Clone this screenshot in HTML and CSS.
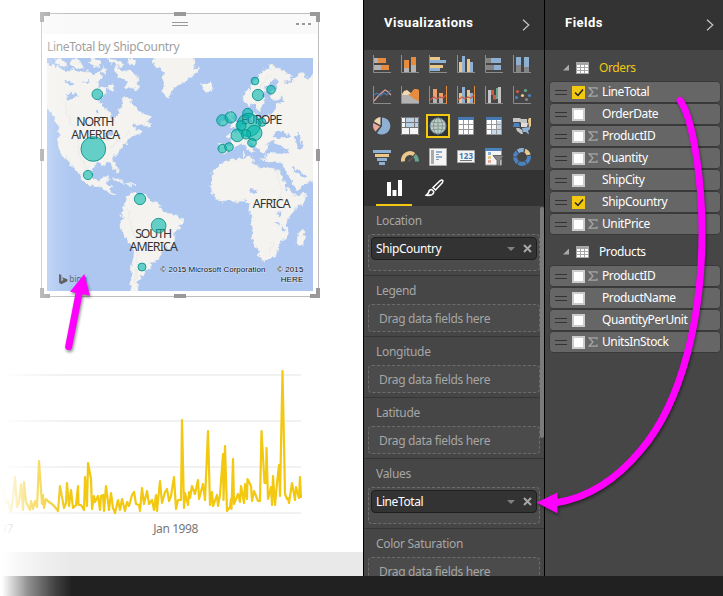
FILE: index.html
```html
<!DOCTYPE html>
<html lang="en">
<head>
<meta charset="utf-8">
<title>Report editor</title>
<link rel="stylesheet" href="styles.css">
</head>
<body>
<svg class="defs" width="0" height="0">
  <defs>
    <symbol id="sigma" viewBox="0 0 10 10"><path d="M9 2.6V.8H1L5 5 1 9.2h8V7.4" fill="none" stroke="#a6a6a6" stroke-width="1.3"/></symbol>
    <symbol id="table" viewBox="0 0 13 12"><path fill="#a6a6a6" d="M0 0h13v12H0z"/><path fill="#fff" d="M1 3h3v2H1zM5 3h3v2H5zM9 3h3v2H9zM1 6h3v2H1zM5 6h3v2H5zM9 6h3v2H9zM1 9h3v2H1zM5 9h3v2H5zM9 9h3v2H9z"/></symbol>
    <symbol id="chev" viewBox="0 0 8 12"><path d="M1 .7 6.8 6 1 11.3" fill="none" stroke="#c8c8c8" stroke-width="1.2"/></symbol>
    <symbol id="close" viewBox="0 0 9 9"><path d="M1 1l7 7M8 1 1 8" fill="none" stroke="#a6a6a6" stroke-width="2"/></symbol>
    <filter id="coast" x="0" y="0" width="1" height="1"><feTurbulence type="fractalNoise" baseFrequency=".075" numOctaves="2" seed="4"/><feDisplacementMap in="SourceGraphic" scale="20" xChannelSelector="R" yChannelSelector="G"/></filter>
  </defs>
</svg>
<div class="app">
  <div class="workspace">
    <main class="canvas">
      <section class="card">
        <i class="h tl"></i><i class="h tc"></i><i class="h tr"></i><i class="h ml"></i><i class="h mr"></i><i class="h bl"></i><i class="h bc"></i><i class="h br"></i>
        <div class="card-bar"><span class="grip"></span><span class="dots"><b></b><b></b><b></b></span></div>
        <h2 class="card-title"><span>LineTotal by ShipCountry</span></h2>
        <svg class="map" viewBox="51 174 798 699" width="266" height="233">
          <rect x="51" y="174" width="798" height="699" fill="#adc7f1"/>
          <g filter="url(#coast)">
          <g fill="#f4f3f0" stroke="#e8eaea" stroke-width="1.500" stroke-linejoin="round">
            <path d="M30 190 68 196 90 205 110 218 130 207 150 220 175 212 190 222 212 217 215 232 200 246 208 258 228 262 232 274 220 286 206 294 210 312 226 328 242 338 250 360 262 352 266 332 280 314 276 297 282 288 296 294 302 311 304 304 315 320 327 334 350 343 368 352 340 372 308 378 312 388 326 388 332 400 314 405 301 412 288 428 276 438 270 452 255 463 247 480 266 501 263 518 252 510 246 490 232 489 222 496 202 487 187 500 184 522 194 541 211 544 218 532 237 528 231 550 243 560 241 574 255 582 248 584 232 577 219 561 194 560 173 550 157 542 149 524 135 505 119 492 108 475 93 462 84 430 87 397 82 369 70 352 60 330 30 320Z"/>
            <path d="M75 174 96 178 112 196 94 201 74 188ZM128 178 150 185 160 201 141 207 119 194ZM187 174 210 182 214 194 197 201 175 188ZM216 203 230 210 226 222 210 216ZM233 174 260 178 280 193 266 200 255 188 240 187ZM250 204 264 200 275 214 300 211 318 226 328 241 319 250 331 263 316 274 307 261 301 268 281 259 294 245 283 234 267 231 258 220ZM299 174 318 178 314 194 292 188ZM234 255 250 259 247 271 236 269ZM342 366 363 371 358 382 340 378ZM368 160 490 160 495 190 489 211 508 199 502 216 478 232 466 247 439 258 424 279 416 295 403 286 399 267 404 250 395 235 402 224 391 207 371 194ZM516 253 539 248 551 257 547 268 530 275 519 267Z"/>
            <path d="M299 583 312 574 321 581 347 584 361 602 384 607 392 624 400 638 425 642 459 658 457 672 440 688 431 707 432 731 416 744 402 751 386 775 370 790 360 790 363 806 342 812 341 825 330 825 333 835 322 848 326 890 304 890 299 850 305 825 304 800 311 775 312 748 296 728 284 704 270 679 270 667 280 653 274 636 283 612Z"/>
            <path d="M575 487 595 481 625 477 660 471 669 474 666 488 691 502 718 503 749 510 758 538 769 562 790 588 829 582 823 604 795 629 775 653 768 668 776 703 760 719 747 731 746 754 733 773 716 779 700 783 689 770 680 743 665 711 669 687 663 669 667 653 656 634 660 612 650 603 633 600 615 604 598 600 580 607 557 595 546 574 541 546 551 514Z"/>
            <path d="M821 685 824 709 818 732 808 742 801 732 803 702ZM567 430 590 434 606 434 602 416 592 407 604 400 617 397 630 388 642 374 662 365 665 337 677 332 680 354 700 356 719 346 735 329 738 312 765 304 758 293 739 300 723 293 722 276 739 264 742 244 731 237 719 251 704 268 700 286 706 299 697 315 690 336 681 331 674 309 658 315 641 304 639 285 656 267 673 246 686 226 702 211 724 202 749 205 785 227 778 242 759 247 773 253 788 239 809 232 810 218 820 218 829 237 870 205 870 531 833 547 798 572 785 540 768 515 760 493 742 484 707 486 704 469 719 460 750 462 779 455 762 441 738 431 729 424 711 432 708 452 699 464 686 452 672 432 655 421 662 440 674 451 667 464 654 448 641 430 618 435 601 454 584 463 568 455Z"/>
            <path d="M591 345 598 331 611 338 606 353 621 366 622 382 600 382 607 366ZM574 361 591 357 588 374 571 378ZM245 533 271 539 283 548 260 543ZM288 549 307 551 315 558 293 556ZM640 456 645 455 645 468 640 468ZM691 475 710 478 700 481ZM716 198 730 195 735 202 720 207Z"/>
          </g>
          <g fill="#adc7f1"><path d="M108 283 127 279 148 285 130 293 115 299ZM106 239 133 246 136 252 118 256ZM157 246 177 239 174 250ZM197 320 210 342 200 338ZM224 401 242 391 252 400 237 405 242 424 231 421ZM253 410 270 406 267 412ZM731 404 745 392 771 398 777 415 753 411 738 421ZM795 406 809 398 813 424 822 441 808 448 799 429ZM664 567 681 570 674 582 663 577ZM743 636 752 639 750 651 740 648ZM737 659 746 667 747 680 741 674ZM755 675 764 690 760 699ZM786 500 823 524 833 526 824 533 800 520Z"/></g>
          <g fill="none" stroke="#e2e3e0" stroke-width="5" opacity=".4"><path d="M100 300 116 350 128 390 145 430 149 470 172 507M240 445 265 421 305 390M292 620 300 670 322 720 322 790 316 845M735 500 755 565 747 615M714 760 732 724M680 310 690 260 722 225"/></g>
          </g>
          <g class="continent" text-anchor="middle">
            <text x="196" y="378" textLength="114">NORTH</text><text x="197" y="417" textLength="147">AMERICA</text>
            <text x="695" y="373" textLength="124">EUROPE</text><text x="725" y="625" textLength="114">AFRICA</text>
            <text x="371" y="715" textLength="111">SOUTH</text><text x="371" y="754" textLength="145">AMERICA</text>
          </g>
          <g fill="#01b8aa" fill-opacity=".6" stroke="#018b84" stroke-opacity=".8" stroke-width="3">
            <circle cx="202" cy="283" r="16"/><circle cx="190" cy="447" r="37"/><circle cx="174" cy="525" r="14"/>
            <circle cx="330" cy="597" r="17"/><circle cx="386" cy="677" r="22"/><circle cx="336" cy="801" r="12"/>
            <circle cx="675" cy="243" r="11.5"/><circle cx="723" cy="269" r="13"/><circle cx="684" cy="285" r="17"/>
            <circle cx="577" cy="361" r="17"/><circle cx="602" cy="352" r="17"/><circle cx="653" cy="340" r="15"/>
            <circle cx="656" cy="375" r="35"/><circle cx="633" cy="377" r="15"/><circle cx="696" cy="367" r="12"/>
            <circle cx="673" cy="399" r="23"/><circle cx="622" cy="406" r="19"/><circle cx="648" cy="403" r="14"/>
            <circle cx="577" cy="446" r="13"/><circle cx="597" cy="441" r="13"/><circle cx="666" cy="428" r="13"/>
          </g>
          <path fill="#555" d="M87 822 94 825V843L100 840 96 832 112 838V844L94 853 87 848Z"/>
          <text class="bing" x="118" y="846">bing</text>
          <g class="copyright"><text x="391" y="815" textLength="315">© 2015 Microsoft Corporation</text><text x="741" y="815" textLength="79">© 2015</text><text x="752" y="845" textLength="68">HERE</text></g>
        </svg>
      </section>
      <figure class="trend">
        <svg viewBox="0 360 310 160" width="310" height="160">
          <path d="M3 375H301M3 421H301M3 467H301M3 513H301" stroke="#f1f1f1" stroke-width="2"/>
          <path fill="none" stroke="#f2c811" stroke-width="2.2" stroke-linejoin="round" d="M1 506 3.5 487 5.5 504 8 501 11 512 13 498 15 477 17 507 19 502 21 484 23 510 24 482 26 502 30 510 31 501 33 509 35 501 37 507 39 461 42 504 43 495 44 508 46 499 49 502 52 504 55 507 58 511 60 486 64 508 66 503 67 483 69 506 71 490 73 508 76 505 78 486 78.5 505 81 505 84 510 85 477 87 506 88 463 91 479 92 509 94 496 95 502 98 496 100 510 101 496 103 495 104 511 106 486 108 502 109 510 111 493 113 508 115 513 118 500 120 510 122 499 125 511 127 502 129 506 132 495 134 492 136 504 139 505 140 511 142 488 144 504 147 491 149 504 152 500 154 510 156 495 157 511 160 481 162 503 165 492 167 489 169 501 171 496 174 477 176 509 178 500 181 500 182 420 184 508 185 493 188 505 189 492 190 498 192 486 195 494 198 480 199 499 203 484 205 500 208 431 210 505 212 492 213 506 217 495 218 506 220 495 223 454 223.5 500 225 446 227 511 230 507 231 499 231.5 509 233 459 234 504 238 494 240 502 241 486 244 503 245 484 247 499 247.5 479 251 486 252 501 254 491 258 501 260 501 261.5 431 264.5 483 266 483 266.5 448 268 499 271 487 272 505 273 476 275 505 277 483 279 465 280 496 282.5 371 285 494 287 499 288 498 289 503 292 483 295 500 296 487 299 498 300 477 301 498"/>
        </svg>
        <figcaption><span>1997</span><span>Jan 1998</span></figcaption>
      </figure>
      <div class="canvas-foot"></div>
    </main>

    <aside class="viz">
      <header class="pane-head"><h1 class="t-viz">Visualizations</h1><svg width="8" height="12"><use href="#chev"/></svg></header>
      <div class="gallery">
        <svg viewBox="0 0 18 18"><path fill="#b3b3b3" d="M1 3h6v5H1zM1 10h8v5H1z"/><path fill="#e68c3f" d="M5 3h8v5H5zM8 10h8v5H8z"/><path class="axis" d="M.5 0v17.5H18"/></svg>
        <svg viewBox="0 0 18 18"><path fill="#e68c3f" d="M3 5h5v8H3zM10 2h5v11h-5z"/><path fill="#b3b3b3" d="M3 13h5v4H3zM10 10h5v7h-5z"/><path class="axis" d="M.5 0v17.5H18"/></svg>
        <svg viewBox="0 0 18 18"><path fill="#ebc88a" d="M1 2h10v3H1zM1 10h13v3H1z"/><path fill="#8eb0d3" d="M1 5h16v3H1zM1 13h10v3H1z"/><path class="axis" d="M.5 0v17.5H18"/></svg>
        <svg viewBox="0 0 18 18"><path fill="#ebc88a" d="M2 7h3v10H2zM10 4h3v13h-3z"/><path fill="#8eb0d3" d="M5 1h3v16H5zM13 7h3v10h-3z"/><path class="axis" d="M.5 0v17.5H18"/></svg>
        <svg viewBox="0 0 18 18"><path fill="#858585" d="M1 3h5v5H1zM1 10h8v5H1z"/><path fill="#8eb0d3" d="M6 3h10v5H6zM9 10h7v5H9z"/><path class="axis" d="M.5 0v17.5H18"/></svg>
        <svg viewBox="0 0 18 18"><path fill="#8eb0d3" d="M3 2h5v9H3zM11 2h5v11h-5z"/><path fill="#858585" d="M3 10h5v7H3zM11 12h5v5h-5z"/><path class="axis" d="M.5 0v17.5H18"/></svg>

        <svg viewBox="0 0 18 18"><path fill="none" stroke="#dfa096" stroke-width="1.2" d="m1 15 5-6 6-5 2 1 4 4"/><path fill="none" stroke="#4778af" stroke-width="1.2" d="m1 9 3-2 3 3 4-3 3 2 4-5"/><path class="axis" d="M.5 0v17.5H18"/></svg>
        <svg viewBox="0 0 18 18"><path fill="#f0d9b1" d="m1 8 2-3 3-1 5 4v6H1z"/><path fill="#e68c3f" d="m7 9 3-2 3-4h3l2 1v12H8z"/><path fill="#b3b3b3" d="m1 9 7 0 5 4 5 2v2H1z"/><path class="axis" d="M.5 0v17.5H18"/></svg>
        <svg viewBox="0 0 18 18"><path fill="#f0a068" d="M4 3h4v8H4zM10 7h4v4h-4z"/><path fill="#b3b3b3" d="M4 11h4v6H4zM10 12h4v5h-4z"/><path d="m1 14 4-3 3 2 3-2 3 1 3-3" fill="none" stroke="#cf5a43" stroke-width="1.2"/><path class="axis" d="M.5 0v17.5H18"/><path stroke="#e68c3f" d="M17.5 0v18"/></svg>
        <svg viewBox="0 0 18 18"><path fill="#ebc88a" d="M2 7h3v10H2zM10 4h3v13h-3z"/><path fill="#8eb0d3" d="M5 1h3v16H5zM13 7h3v10h-3z"/><path d="m1 14 4-3 3 2 3-2 3 1 3-3" fill="none" stroke="#cf5a43" stroke-width="1.2"/><path class="axis" d="M.5 0v17.5H18"/><path stroke="#e68c3f" d="M17.5 0v18"/></svg>
        <svg viewBox="0 0 18 18"><path fill="#c4c4c4" d="M3 4h3v13H3zM13 1h3v16h-3z"/><path fill="#cf5a43" d="M6 4h3v5H6zM8 9h3v4.500H8z"/><path fill="#6aa58b" d="M11 2h2v11h-2z"/><path class="axis" d="M.5 0v17.5H18"/></svg>
        <svg viewBox="0 0 18 18"><g fill="#cf5a43"><circle cx="4.500" cy="5.500" r="1.600"/></g><circle cx="9.500" cy="9.500" r="1.600" fill="#ebc88a"/><g fill="#4a83bf"><circle cx="3.500" cy="11.500" r="1.600"/><circle cx="16.500" cy="9.500" r="1.600"/></g><circle cx="12.500" cy="4.500" r="1.600" fill="#6aa58b"/><circle cx="13.500" cy="13.500" r="1.600" fill="#858585"/><path class="axis" d="M.5 0v17.5H18"/></svg>

        <svg viewBox="0 0 18 18"><path fill="#8eb0d3" d="M9 9V.5a8.500 8.500 0 1 1-5 15.500z"/><path fill="#f0d9b1" d="M7.500 8.200V0A8.500 8.500 0 0 0 1 4.600z"/><path fill="#eaa99a" d="M7 9.500 2.500 14.500A9 9 0 0 1 .3 6z"/></svg>
        <svg viewBox="0 0 18 18"><path fill="#f5f5f5" d="M0 0h18v18H0z"/><path fill="#b8cfe5" d="M5 1h12v9H5z"/><path fill="none" stroke="#777" d="M.5.5h17v17H.5zM4.500 0v10M0 10.500h18M0 5.500h17M13.500 0v10M8.500 11v6"/></svg>
        <span class="picked"><svg viewBox="0 0 18 18"><circle cx="9" cy="9" r="8" fill="#c8cccb" stroke="#5a7f9a"/><g fill="none" stroke="#7d9d90"><path d="M9 1v16M1 9h16M2.500 5q6.500 2 13 0M2.500 13q6.500-2 13 0"/><ellipse cx="9" cy="9" rx="4.500" ry="8"/></g></svg></span>
        <svg viewBox="0 0 18 18"><path fill="#fff" d="M1 1h16v16H1z"/><path fill="#4778af" d="M1 0h16v3H1z"/><path fill="none" stroke="#999" d="M1.500 3v14.500h15V3M6.500 3v14M11.500 3v14M1 7.500h16M1 12.500h16"/></svg>
        <svg viewBox="0 0 18 18"><path fill="#fff" d="M1 1h16v16H1z"/><path fill="#c7d9eb" d="M11 4h6v13h-6zM7 12h10v5H7z"/><path fill="#4778af" d="M1 0h16v3H1z"/><path fill="none" stroke="#999" d="M1.500 3v14.500h15V3M6.500 3v14M11.500 3v14M1 7.500h16M1 12.500h16"/></svg>
        <svg viewBox="0 0 18 18"><path fill="#c4c4c4" d="M0 1h7l1 1h6v4H8L7 5H0zM3 11h3l3 2 1 4H8l-4-3z"/><path fill="#4a83bf" d="M1 6h5l1 4H0z"/><path fill="#dedede" d="M8 6h7l-1 4H8z"/><path fill="#ebc88a" d="m15 3 1-2h2v8l-2 2z"/><path fill="#8eb0d3" d="m9 11 8-1v2l-2 2 1 3h-1l-2-2h-3z"/></svg>

        <svg viewBox="0 0 18 18"><path fill="#8eb0d3" d="M0 2h18v3H0zM4 10h10v3H4zM6 14h6v3H6z"/><path fill="#ebc88a" d="M2 6h14v3H2z"/></svg>
        <svg viewBox="0 0 18 18"><path fill="none" stroke="#ebc88a" stroke-width="4" d="M2 13.500a7 7.500 0 0 1 11-7"/><path fill="none" stroke="#6aa58b" stroke-width="4" d="M13.500 7.500q2.500 2 2.500 6"/><path d="m7 13 5-4-3 4z" fill="#555" stroke="#5c5c5c"/></svg>
        <svg viewBox="0 0 18 18"><path fill="#f5f5f5" stroke="#aaa" d="M.5.5h17v17H.5z"/><path fill="#aaa" d="M2 2h3v14H2z"/><path fill="#8eb0d3" d="M7 3h6v2H7zM7 8h6v2H7z"/><path fill="#999" d="M7 6h3v1H7zM7 11h3v1H7z"/></svg>
        <svg viewBox="0 0 18 18"><path fill="#f5f5f5" stroke="#aaa" d="M.5 2.500h17v12H.5z"/><text class="n123" x="2" y="10.500" textLength="14">123</text><path stroke="#777" d="M3 12.500h12"/></svg>
        <svg viewBox="0 0 18 18"><path fill="#f5f5f5" stroke="#999" d="M.5 1h16v16h-16z"/><path fill="#4a83bf" d="M0 0h17v3H0z"/><path fill="#8eb0d3" d="M3 4h3v3H3z"/><path fill="#ebc88a" d="M3 8h3v3H3z"/><path fill="#eaa99a" d="M3 12h3v3H3z"/><path fill="#858585" stroke="#444" stroke-width=".7" d="M8 7.500h11l-4 5v4l-3 2v-6z"/></svg>
        <svg viewBox="0 0 18 18"><g fill="none" stroke-width="4"><circle cx="9" cy="9" r="7" stroke="#4a83bf"/><path stroke="#8eb0d3" d="M5 3.300A7 7 0 0 1 10.500 2.200"/><path stroke="#ebc88a" d="M11.500 2.500q3.300 1.500 4.300 4.500"/></g><path stroke="#464646" d="m3 1 2 4M12 0l-1 5M13 8l5-1M0 9h5M6 13l-2 4M12 13l2 4"/></svg>
      </div>
      <nav class="tabs">
        <span class="tab on"><svg width="15" height="16" viewBox="0 0 15 16"><path fill="#fff" d="M0 2h4v14H0zM5.500 10h4v6h-4zM11 0h4v16h-4z"/></svg></span>
        <span class="tab"><svg width="19" height="18" viewBox="0 0 19 18"><path fill="none" stroke="#fff" stroke-width="1.500" d="m8 8.500 7-6.700q1.800-1.300 2.600-.5t-.5 2.700L10.500 11Z"/><path fill="none" stroke="#fff" stroke-width="1.600" d="M1.200 16.200q2-1 2.500-3.200.5-2.500 3-2.500l2 2q.3 2.500-2 3.300-2.500.8-5.500.4Z"/></svg></span>
      </nav>
      <div class="wells">
        <section class="well"><h3>Location</h3><div class="drop tall"><div class="pill"><span class="w-sc">ShipCountry</span><i class="caret"></i><svg width="9" height="9"><use href="#close"/></svg></div></div></section>
        <section class="well"><h3>Legend</h3><div class="drop">Drag data fields here</div></section>
        <section class="well"><h3>Longitude</h3><div class="drop">Drag data fields here</div></section>
        <section class="well"><h3>Latitude</h3><div class="drop">Drag data fields here</div></section>
        <section class="well"><h3>Values</h3><div class="drop tall"><div class="pill"><span>LineTotal</span><i class="caret"></i><svg width="9" height="9"><use href="#close"/></svg></div></div></section>
        <section class="well"><h3>Color Saturation</h3><div class="drop">Drag data fields here</div></section>
        <div class="scrollbar"></div>
      </div>
    </aside>

    <aside class="fields">
      <header class="pane-head"><h1 class="t-fields">Fields</h1><svg width="8" height="12"><use href="#chev"/></svg></header>
      <div class="group">
        <div class="group-head on"><i class="tri"></i><svg width="13" height="12"><use href="#table"/></svg><span>Orders</span></div>
        <div class="field"><i class="bars"></i><i class="box checked"><svg viewBox="0 0 13 13"><path d="m3 6.500 3 3 5-6"/></svg></i><svg class="sig"><use href="#sigma"/></svg><span>LineTotal</span></div>
        <div class="field"><i class="bars"></i><i class="box"></i><svg class="sig"></svg><span>OrderDate</span></div>
        <div class="field"><i class="bars"></i><i class="box"></i><svg class="sig"><use href="#sigma"/></svg><span>ProductID</span></div>
        <div class="field"><i class="bars"></i><i class="box"></i><svg class="sig"><use href="#sigma"/></svg><span>Quantity</span></div>
        <div class="field"><i class="bars"></i><i class="box"></i><svg class="sig"></svg><span>ShipCity</span></div>
        <div class="field"><i class="bars"></i><i class="box checked"><svg viewBox="0 0 13 13"><path d="m3 6.500 3 3 5-6"/></svg></i><svg class="sig"></svg><span>ShipCountry</span></div>
        <div class="field"><i class="bars"></i><i class="box"></i><svg class="sig"><use href="#sigma"/></svg><span>UnitPrice</span></div>
      </div>
      <div class="group">
        <div class="group-head"><i class="tri"></i><svg width="13" height="12"><use href="#table"/></svg><span>Products</span></div>
        <div class="field"><i class="bars"></i><i class="box"></i><svg class="sig"><use href="#sigma"/></svg><span>ProductID</span></div>
        <div class="field"><i class="bars"></i><i class="box"></i><svg class="sig"></svg><span>ProductName</span></div>
        <div class="field"><i class="bars"></i><i class="box"></i><svg class="sig"></svg><span>QuantityPerUnit</span></div>
        <div class="field"><i class="bars"></i><i class="box"></i><svg class="sig"><use href="#sigma"/></svg><span>UnitsInStock</span></div>
      </div>
    </aside>
  </div>
  <footer class="statusbar"></footer>
  <div class="fade"></div>
  <svg class="arrows" width="723" height="596" viewBox="0 0 723 596">
    <g fill="none" stroke="#f0f" stroke-width="7" stroke-linecap="round">
      <path d="M680 100.500C693 118 702 180 702 232C702 318 682 402 641 450C617 479 588 498 555 503"/>
      <path d="M68.700 346.500 79.500 291"/>
    </g>
    <path fill="#f0f" d="M536.700 502.500 557.500 492.500V513.500ZM84.300 274 70 291.700 90 295.700Z"/>
  </svg>
</div>
</body>
</html>
```
FILE: styles.css
```css
* { box-sizing: border-box; margin: 0; padding: 0; }
body { font: 12px/16px "Noto Sans", "Open Sans", sans-serif; overflow: hidden; }
.defs { position: absolute; }
.app { position: relative; width: 723px; height: 596px; overflow: hidden; display: flex; flex-direction: column; background: #fff; }
.workspace { display: flex; height: 576px; }
.statusbar { height: 20px; background: #212121; }

/* report canvas */
.canvas { width: 363px; display: flex; flex-direction: column; background: #fff; }
.card { position: relative; width: 278px; height: 284px; margin: 13px 0 0 41px; border: 1px solid #bdbdbd; padding: 0 5px; background: #fff; }
.card-bar { height: 20px; margin: 0 -5px; background: #f9f9f9; display: grid; grid-template-columns: 1fr 16px 1fr; align-items: center; }
.grip { grid-column: 2; height: 4px; border: solid #999; border-width: 1px 0; }
.dots { display: flex; gap: 3px; justify-content: flex-end; padding-right: 7px; }
.dots b { width: 3px; height: 2px; background: #999; }
.card-title { height: 24px; line-height: 25px; font-size: 12px; font-weight: 400; color: #a0a0a0; white-space: nowrap; letter-spacing: -.32px; }
.map { display: block; }
.continent { font: 37px "Noto Sans", sans-serif; fill: #333; }
.bing { font: 25px "Noto Sans", sans-serif; fill: #666; }
.copyright { font: 24px "Liberation Sans", sans-serif; fill: #111; stroke: #fff; stroke-width: 3px; stroke-opacity: .5; paint-order: stroke; }
.h { position: absolute; border: 0 solid #999; }
.tl, .tr, .bl, .br { width: 10px; height: 10px; }
.tl { left: -2px; top: -2px; border-width: 4px 0 0 4px; }
.tr { right: -2px; top: -2px; border-width: 4px 4px 0 0; }
.bl { left: -2px; bottom: -2px; border-width: 0 0 4px 4px; }
.br { right: -2px; bottom: -2px; border-width: 0 4px 4px 0; }
.tc, .bc { left: 132px; width: 12px; border-top-width: 4px; }
.tc { top: -2px; }
.bc { bottom: -2px; }
.ml, .mr { top: 135px; height: 12px; border-left-width: 4px; }
.ml { left: -2px; }
.mr { right: -2px; }
.trend { margin-top: 63px; height: 192px; }
.trend svg { display: block; }
.trend figcaption { display: flex; justify-content: space-between; width: 211px; margin-left: -13px; padding-top: 1px; color: #777; letter-spacing: -.4px; }
.canvas-foot { height: 24px; background: #e9e9e9; }

/* panes */
.viz, .fields { background: #464646; border-left: 1px solid #000; display: flex; flex-direction: column; overflow: hidden; }
.viz { width: 181px; }
.fields { width: 179px; }
.pane-head { flex: none; height: 50px; background: #333; display: flex; justify-content: space-between; align-items: center; padding: 0 14px 4px 20px; }
.pane-head svg { margin-top: 3px; }
.fields .pane-head { padding-right: 9px; }
.pane-head h1 { font: 700 13px/20px Roboto, sans-serif; color: #fff; letter-spacing: .5px; }
.gallery { flex: none; height: 120px; display: grid; grid-template-columns: repeat(6, 18px); grid-auto-rows: 18px; gap: 13px 10px; padding: 5px 0 0 9px; }
.gallery svg { display: block; width: 18px; height: 18px; overflow: visible; }
.axis { fill: none; stroke: #8c8c8c; }
.picked { width: 24px; height: 24px; margin: -3px; border: 2px solid #f2c811; background: #333; padding: 1px; }
.n123 { font: 700 8px "Noto Sans", sans-serif; fill: #4778af; }
.tabs { flex: none; height: 36px; background: #333; display: flex; gap: 4px; padding-left: 12px; }
.tab { width: 36px; display: flex; justify-content: center; align-items: center; padding-top: 2px; border-bottom: 2px solid transparent; }
.tab.on { border-color: #f2c811; }
.wells { position: relative; flex: 1; min-height: 0; overflow: hidden; }
.well { border-bottom: 1px solid #353535; padding: 0 4px 4px; }
.well h3 { height: 28px; line-height: 29px; padding-left: 8px; font-size: 12px; font-weight: 400; color: #a6a6a6; letter-spacing: -.3px; }
.drop { height: 28px; line-height: 27px; padding-left: 10px; border: 1px dashed #6c6c6c; border-radius: 4px; background: #4b4b4b; color: #a6a6a6; letter-spacing: -.33px; }
.drop.tall { height: 37px; padding: 2px; }
.pill { height: 23px; border: 1px solid #1f1f1f; border-radius: 4px; background: #333; display: flex; align-items: center; padding: 0 4px; color: #fff; letter-spacing: -.4px; }
.pill span { flex: 1; }
.caret { border: 4px solid transparent; border-top-color: #808080; border-bottom: 0; margin-right: 8px; }
.scrollbar { position: absolute; right: 0; top: 1px; width: 4px; height: 231px; border-radius: 2px; background: #7b7b7b; }
.group { padding-left: 4px; }
.group-head { height: 31px; display: flex; align-items: center; padding: 4px 0 0 13px; color: #fff; letter-spacing: -.4px; }
.group + .group .group-head { height: 30px; padding-top: 3px; }
.group-head.on { color: #f2c811; }
.group-head svg { margin: 0 10px 0 7px; }
.tri { width: 6px; height: 6px; background: #aaa; clip-path: polygon(100% 0, 100% 100%, 0 100%); margin-left: 1px; }
.field { width: 172px; height: 22px; display: flex; align-items: center; padding-left: 5px; border: 1px solid #3a3a3a; border-radius: 4px; background: #666; color: #fff; letter-spacing: -.4px; }
.bars { width: 12px; height: 5px; border: solid #333; border-width: 1px 0; margin-right: 5px; }
.box { width: 13px; height: 13px; border: 2px solid #ccc; background: #fff; margin-right: 3px; }
.box.checked { border: 0; background: #f2c811; }
.box svg { display: block; fill: none; stroke: #222; stroke-width: 1.5; }
.sig { width: 10px; height: 10px; margin-right: 4px; }

/* overlays */
.fade { position: absolute; inset: 0 auto 0 0; width: 72px; background: linear-gradient(90deg, #fff 2px, rgba(255, 255, 255, .5) 28px, rgba(255, 255, 255, .15) 55px, rgba(255, 255, 255, 0)); }
.arrows { position: absolute; left: 0; top: 0; filter: drop-shadow(1px 2px 1.500px rgba(0, 0, 0, .45)); }
```
